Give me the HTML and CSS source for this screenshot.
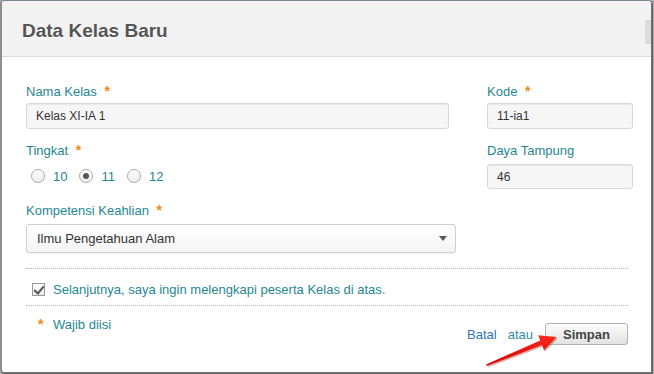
FILE: index.html
```html
<!DOCTYPE html>
<html lang="id">
<head>
    <meta charset="UTF-8">
    <title>Data Kelas Baru</title>
    <link rel="stylesheet" href="styles.css">
</head>
<body>
    <div class="modal">
        <div class="modal-header">
            <h1>Data Kelas Baru</h1>
            <span class="scroll-thumb"></span>
        </div>

        <div class="modal-body">
            <div class="form-grid">
                <div class="col-left">
                    <div class="field">
                        <label>Nama Kelas <span class="req">*</span></label>
                        <input type="text" class="input input-nama" value="Kelas XI-IA 1">
                    </div>
                    <div class="field field-tingkat">
                        <label>Tingkat <span class="req">*</span></label>
                        <div class="radio-row">
                            <label class="radio"><input type="radio" name="tingkat"> 10</label>
                            <label class="radio"><input type="radio" name="tingkat" checked> 11</label>
                            <label class="radio"><input type="radio" name="tingkat"> 12</label>
                        </div>
                    </div>
                    <div class="field field-kompetensi">
                        <label>Kompetensi Keahlian <span class="req">*</span></label>
                        <div class="select">
                            <span>Ilmu Pengetahuan Alam</span>
                            <span class="caret"></span>
                        </div>
                    </div>
                </div>
                <div class="col-right">
                    <div class="field">
                        <label>Kode <span class="req">*</span></label>
                        <input type="text" class="input" value="11-ia1">
                    </div>
                    <div class="field field-daya">
                        <label>Daya Tampung</label>
                        <input type="text" class="input input-daya" value="46">
                    </div>
                </div>
            </div>

            <div class="check-row">
                <label class="check"><input type="checkbox" checked> Selanjutnya, saya ingin melengkapi peserta Kelas di atas.</label>
            </div>

            <div class="modal-footer">
                <p class="note"><span class="req">*</span> Wajib diisi</p>
                <div class="actions">
                    <a href="#" class="link-batal">Batal</a>
                    <span class="atau">atau</span>
                    <button class="btn-simpan">Simpan</button>
                </div>
            </div>
        </div>
    </div>

    <svg class="arrow" width="654" height="374" viewBox="0 0 654 374">
        <defs>
            <linearGradient id="red" x1="0" y1="0" x2="0" y2="1">
                <stop offset="0" stop-color="#ff2a1a"/>
                <stop offset="1" stop-color="#d40000"/>
            </linearGradient>
        </defs>
        <polygon points="486,364.5 540.2,340.5 538.2,335.3 556.5,337 544,350.3 542,345.1 487,365.8" fill="#8a1010" opacity="0.35" transform="translate(1,1.5)"/>
        <polygon points="486,364.5 540.2,340.5 538.2,335.3 556.5,337 544,350.3 542,345.1 487,365.8" fill="url(#red)"/>
    </svg>
</body>
</html>
```

FILE: styles.css
```css
* {
    margin: 0;
    padding: 0;
    box-sizing: border-box;
}
body {
    font-family: "Liberation Sans", Arial, sans-serif;
    font-size: 13px;
    color: #333;
    background: #a7abb0;
    width: 654px;
    height: 374px;
    overflow: hidden;
    position: relative;
}
.modal {
    position: relative;
    width: 652px;
    height: 373px;
    background: #fff;
    border-top: 1px solid #7b8795;
    border-left: 2px solid #8e8e8e;
    border-right: 1px solid #6f6f6f;
    border-bottom: 1px solid #707070;
    border-radius: 4px 4px 0 4px;
    box-shadow: 1px 1px 0 #666;
    overflow: hidden;
}
.modal-header {
    height: 56px;
    background: #f2f2f2;
    border-bottom: 1px solid #dadada;
    padding: 4px 0 0 20px;
    display: flex;
    align-items: center;
}
.modal-header h1 {
    font-size: 19px;
    font-weight: bold;
    color: #555;
    text-shadow: 0 1px 0 #fff;
}
.scroll-thumb {
    position: absolute;
    top: 19px;
    right: 0;
    width: 6px;
    height: 24px;
    background: #dcdcdc;
}
.modal-body {
    padding: 27px 23px 0 24px;
}
.form-grid {
    display: grid;
    grid-template-columns: 430px 146px;
    column-gap: 31px;
    margin-right: -5px;
}
.field > label {
    display: block;
    height: 16px;
    line-height: 16px;
    margin-bottom: 3px;
    color: #1f8792;
}
.req {
    color: #f28a10;
    font-weight: bold;
    font-size: 14px;
    line-height: 0;
    margin-left: 4px;
}
.input {
    display: block;
    width: 100%;
    height: 26px;
    padding: 0 9px;
    font-family: inherit;
    font-size: 12px;
    color: #333;
    background: #f6f6f6;
    border: 1px solid #d8d8d8;
    border-radius: 3px;
    box-shadow: inset 0 1px 1px rgba(0, 0, 0, 0.06);
}
.input-nama {
    width: 423px;
}
.field-tingkat,
.field-daya {
    margin-top: 14px;
}
.field-daya > label {
    margin-bottom: 5px;
}
.input-daya {
    height: 25px;
}
.radio-row {
    display: flex;
    height: 20px;
    margin-top: 7px;
    padding-left: 5px;
    align-items: center;
}
.radio {
    display: flex;
    align-items: center;
    color: #1f8792;
    margin-right: 12px;
}
.radio input {
    appearance: none;
    width: 14px;
    height: 14px;
    margin-right: 8px;
    border: 1px solid #a9a9a9;
    border-radius: 50%;
    background: linear-gradient(#fff, #ececec);
    position: relative;
}
.radio input:checked::after {
    content: "";
    position: absolute;
    left: 3px;
    top: 3px;
    width: 6px;
    height: 6px;
    border-radius: 50%;
    background: #555;
}
.field-kompetensi {
    margin-top: 17px;
}
.field-kompetensi > label {
    margin-bottom: 5px;
}
.select {
    height: 29px;
    display: flex;
    align-items: center;
    justify-content: space-between;
    padding: 0 8px 0 10px;
    font-size: 13px;
    color: #333;
    background: linear-gradient(#fff, #f4f4f4);
    border: 1px solid #cfcfcf;
    border-radius: 3px;
    box-shadow: 0 1px 1px rgba(0, 0, 0, 0.05);
}
.caret {
    width: 0;
    height: 0;
    border-left: 4px solid transparent;
    border-right: 4px solid transparent;
    border-top: 5px solid #555;
}
.check-row {
    margin-top: 15px;
    height: 38px;
    border-top: 1px dotted #b0b0b0;
    border-bottom: 1px dotted #b0b0b0;
    display: flex;
    align-items: center;
    padding: 4px 0 0 6px;
}
.check {
    display: flex;
    align-items: center;
    color: #1f8792;
}
.check input {
    appearance: none;
    width: 13px;
    height: 13px;
    margin-right: 8px;
    border: 1px solid #9a9a9a;
    background: linear-gradient(#fff, #ececec);
    position: relative;
}
.check input:checked::after {
    content: "";
    position: absolute;
    left: 3px;
    top: 0;
    width: 4px;
    height: 8px;
    border-right: 2px solid #555;
    border-bottom: 2px solid #555;
    transform: rotate(40deg);
}
.modal-footer {
    display: flex;
    justify-content: space-between;
    align-items: flex-start;
}
.note {
    margin-top: 11px;
    padding-left: 12px;
    line-height: 16px;
    color: #1f8792;
}
.note .req {
    margin: 0 6px 0 0;
}
.actions {
    margin-top: 17px;
    display: flex;
    align-items: center;
}
.link-batal {
    color: #2f73b4;
    text-decoration: none;
    margin-right: 11px;
}
.atau {
    color: #3a8aa6;
    margin-right: 12px;
}
.btn-simpan {
    width: 83px;
    height: 22px;
    font-family: inherit;
    font-size: 13px;
    font-weight: bold;
    color: #444;
    background: linear-gradient(#fdfdfd, #e2e2e2);
    border: 1px solid #b4b4b4;
    border-radius: 3px;
}
.arrow {
    position: absolute;
    top: 0;
    left: 0;
    pointer-events: none;
}
```
